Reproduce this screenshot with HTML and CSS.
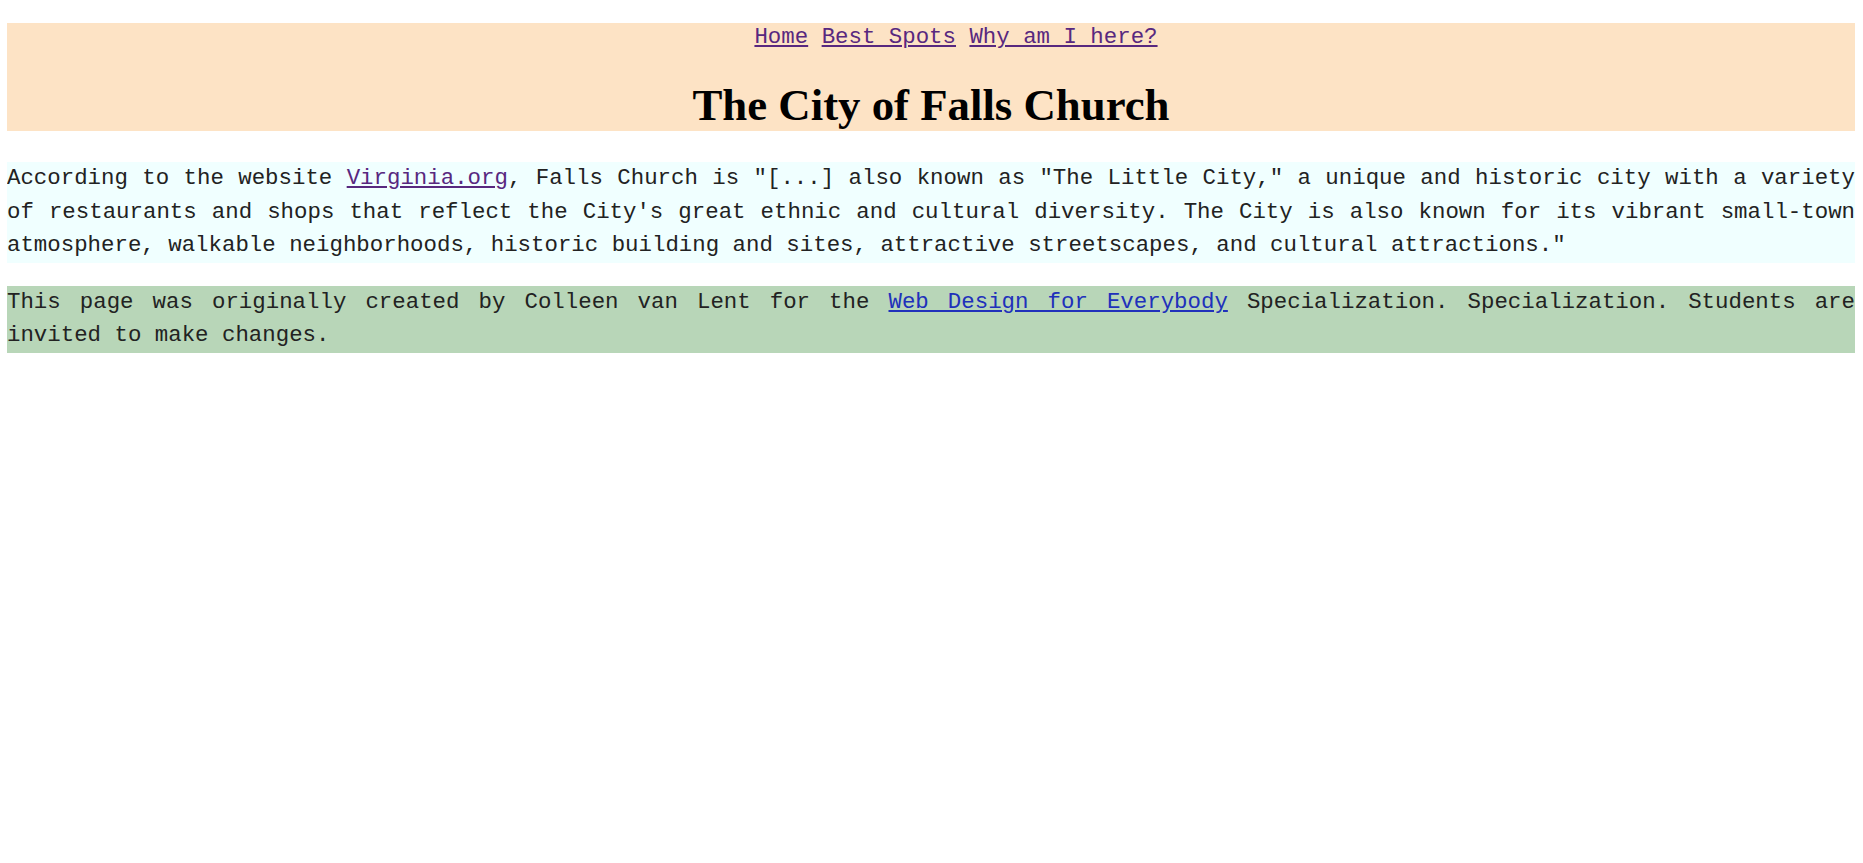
FILE: index.html
```html
<!DOCTYPE html>
<html lang="en">
<head>
<meta charset="utf-8">
<title>The City of Falls Church</title>
<link rel="stylesheet" href="styles.css">
</head>
<body>
<header class="masthead">
  <nav class="nav">
    <a class="visited" href="#home">Home</a> <a class="visited" href="#spots">Best Spots</a> <a class="visited" href="#why">Why am I here?</a>
  </nav>
  <h1 class="title">The City of Falls Church</h1>
</header>
<p class="intro">According to the website <a class="visited" href="#virginia">Virginia.org</a>, Falls Church is "[...] also known as "The Little City," a unique and historic city with a variety of restaurants and shops that reflect the City's great ethnic and cultural diversity. The City is also known for its vibrant small-town atmosphere, walkable neighborhoods, historic building and sites, attractive streetscapes, and cultural attractions."</p>
<p class="credit">This page was originally created by Colleen van Lent for the <a class="fresh" href="#wdfe">Web Design for Everybody</a> Specialization. Specialization. Students are invited to make changes.</p>
</body>
</html>
```

FILE: styles.css
```css
html, body {
  background: #ffffff;
}
body {
  margin: 0 8px 0 7px;
  padding-top: 23px;
  font-family: "Liberation Mono", "Courier New", monospace;
  font-size: 22.4px;
  color: #222222;
}
.masthead {
  background: #fde3c5;
  text-align: center;
  margin: 0;
  padding: 0;
}
.nav {
  line-height: 25px;
  padding: 2px 0 0 50px;
}
.visited {
  color: #58287f;
}
.fresh {
  color: #2030bb;
}
.title {
  font-family: "Liberation Serif", "Times New Roman", serif;
  font-weight: bold;
  font-size: 44.8px;
  line-height: 52px;
  color: #000000;
  margin: 29px 0 0 0;
}
.intro {
  background: #f0ffff;
  margin: 31px 0 0 0;
  line-height: 33.5px;
  text-align: justify;
}
.credit {
  background: #b8d6b8;
  margin: 23px 0 0 0;
  line-height: 33.5px;
  text-align: justify;
}
```
